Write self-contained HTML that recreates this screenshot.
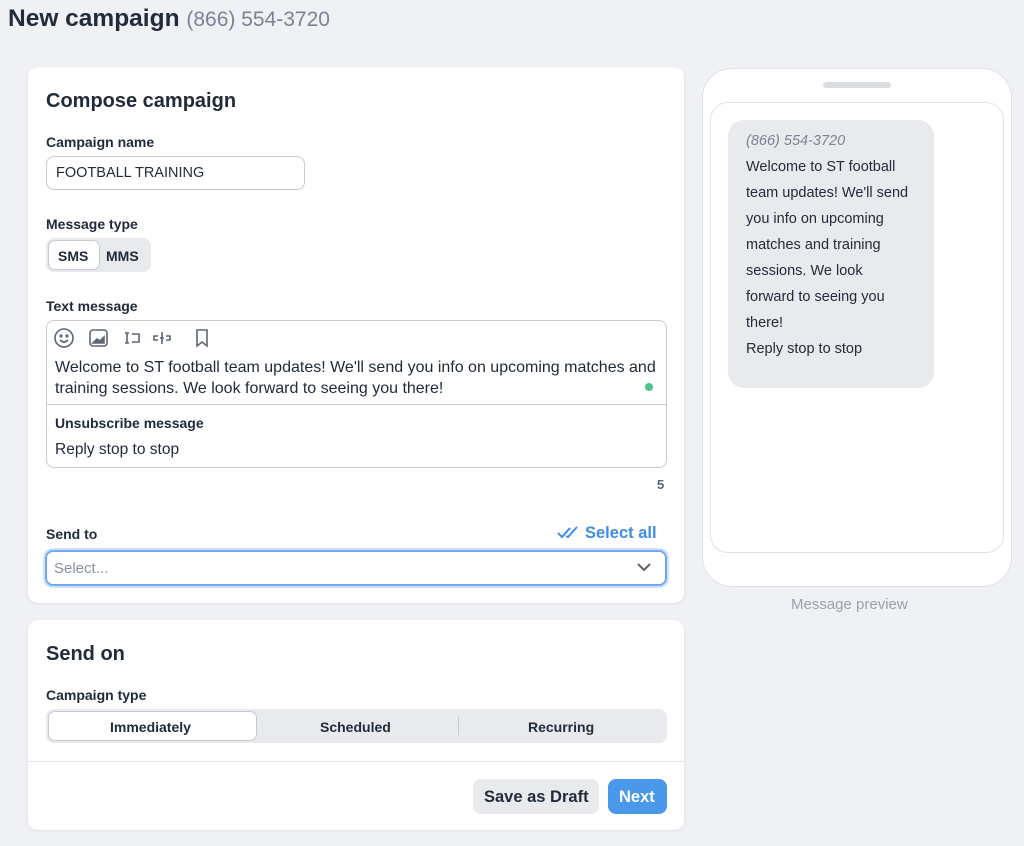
<!DOCTYPE html>
<html><head><meta charset="utf-8"><style>
*{box-sizing:border-box;margin:0;padding:0}
body{width:1024px;height:846px;background:#eff1f5;font-family:"Liberation Sans",sans-serif;color:#222b3a;position:relative;overflow:hidden}
.abs{position:absolute}
h1{position:absolute;left:8px;top:5px;font-size:24.5px;font-weight:bold;color:#222b3a;white-space:nowrap}
h1 span{font-weight:normal;color:#7a8395;font-size:21px}
.card{position:absolute;background:#fff;border-radius:10px;box-shadow:0 1px 3px rgba(0,0,0,.08)}
.lbl{position:absolute;font-size:14px;font-weight:bold;color:#222b3a}
.t{position:absolute;font-size:15px;color:#222b3a;white-space:nowrap}
</style></head><body>
<h1>New campaign <span>(866) 554-3720</span></h1>

<div class="card" style="left:28px;top:67px;width:656px;height:536px"></div>
<div class="t" style="left:46px;top:90px;font-size:20px;font-weight:bold">Compose campaign</div>
<div class="lbl" style="left:46px;top:134px">Campaign name</div>
<div class="abs" style="left:46px;top:156px;width:259px;height:34px;border:1px solid #c5cad3;border-radius:8px"></div>
<div class="t" style="left:56px;top:165px;font-size:14.5px">FOOTBALL TRAINING</div>
<div class="lbl" style="left:46px;top:216px">Message type</div>
<div class="abs" style="left:46px;top:238px;width:105px;height:34px;background:#e8eaee;border-radius:8px"></div>
<div class="abs" style="left:48px;top:240px;width:52px;height:30px;background:#fff;border:1px solid #c5cad3;border-radius:7px"></div>
<div class="lbl" style="left:58px;top:248px">SMS</div>
<div class="lbl" style="left:106px;top:248px">MMS</div>
<div class="lbl" style="left:46px;top:298px">Text message</div>
<div class="abs" style="left:46px;top:320px;width:621px;height:148px;border:1px solid #c5cad3;border-radius:8px"></div>
<div class="abs" style="left:47px;top:404px;width:619px;height:1px;background:#c5cad3"></div>
<svg class="abs" style="left:53px;top:327px" width="165" height="22" fill="none" stroke="#5d6675" stroke-width="1.6">
<circle cx="11" cy="11" r="9"/><circle cx="8" cy="9" r=".8" fill="#5d6675"/><circle cx="14" cy="9" r=".8" fill="#5d6675"/><path d="M7 13q4 4 8 0"/>
<rect x="37" y="3" width="17" height="16" rx="3"/><path d="M40 16l4-4 3 2 4-4v6z" fill="#5d6675"/>
<path d="M72 6h4M74 6v10M72 16h4M79 7h7v8h-7"/>
<path d="M105 9h-4v4h4M113 9h4v4h-4M109 5v12M107 11h4"/>
<path d="M144 3h10v16l-5-4-5 4z"/></svg>
<div class="t" style="left:55px;top:357px;line-height:21px;font-size:16px">Welcome to ST football team updates! We'll send you info on upcoming matches and<br>training sessions. We look forward to seeing you there!</div>
<div class="abs" style="left:645px;top:383px;width:8px;height:8px;border-radius:50%;background:#4cc38a"></div>
<div class="lbl" style="left:55px;top:415px">Unsubscribe message</div>
<div class="t" style="left:55px;top:441px;font-size:15.5px">Reply stop to stop</div>
<div class="t" style="left:657px;top:477px;font-size:13px;color:#5d6675;font-weight:bold">5</div>
<div class="lbl" style="left:46px;top:526px">Send to</div>
<svg class="abs" style="left:557px;top:526px" width="24" height="14" fill="none" stroke="#3e8ee6" stroke-width="2"><path d="M1 7l4 4 8-9M9 10l2 1 9-10"/></svg>
<div class="t" style="left:585px;top:524px;font-size:16.5px;font-weight:bold;color:#3e8ee6">Select all</div>
<div class="abs" style="left:45px;top:550px;width:622px;height:36px;border:2px solid #6ea8ef;border-radius:8px;box-shadow:0 0 0 2px #cfe2fa"></div>
<div class="t" style="left:54px;top:560px;color:#8a92a0">Select...</div>
<svg class="abs" style="left:636px;top:561px" width="16" height="12" fill="none" stroke="#5d6675" stroke-width="2"><path d="M2 3l6 6 6-6"/></svg>

<div class="card" style="left:28px;top:620px;width:656px;height:210px"></div>
<div class="t" style="left:46px;top:643px;font-size:20px;font-weight:bold">Send on</div>
<div class="lbl" style="left:46px;top:687px">Campaign type</div>
<div class="abs" style="left:46px;top:709px;width:621px;height:34px;background:#e8eaee;border-radius:8px"></div>
<div class="abs" style="left:48px;top:711px;width:209px;height:30px;background:#fff;border:1px solid #c5cad3;border-radius:7px"></div>
<div class="abs" style="left:458px;top:717px;width:1px;height:18px;background:#c5cad3"></div>
<div class="lbl" style="left:110px;top:719px">Immediately</div>
<div class="lbl" style="left:320px;top:719px">Scheduled</div>
<div class="lbl" style="left:528px;top:719px">Recurring</div>
<div class="abs" style="left:28px;top:761px;width:656px;height:1px;background:#e3e6eb"></div>
<div class="abs" style="left:473px;top:779px;width:126px;height:35px;background:#e8eaee;border-radius:8px"></div>
<div class="t" style="left:484px;top:788px;font-size:16.5px;font-weight:bold">Save as Draft</div>
<div class="abs" style="left:608px;top:779px;width:59px;height:35px;background:#4a98ea;border-radius:8px"></div>
<div class="t" style="left:619px;top:788px;font-size:16.5px;font-weight:bold;color:#fff">Next</div>

<div class="abs" style="left:702px;top:68px;width:310px;height:519px;background:#fff;border:1px solid #dfe2e7;border-radius:30px"></div>
<div class="abs" style="left:823px;top:82px;width:68px;height:6px;background:#d9dce1;border-radius:3px"></div>
<div class="abs" style="left:710px;top:102px;width:294px;height:451px;border:1px solid #dfe2e7;border-radius:18px"></div>
<div class="abs" style="left:728px;top:120px;width:206px;height:268px;background:#e8eaee;border-radius:16px"></div>
<div class="t" style="left:746px;top:133px;font-size:14.5px;color:#7a8395;font-style:italic">(866) 554-3720</div>
<div class="t" style="left:746px;top:154px;font-size:14.5px;line-height:26px">Welcome to ST football<br>team updates! We'll send<br>you info on upcoming<br>matches and training<br>sessions. We look<br>forward to seeing you<br>there!<br>Reply stop to stop</div>
<div class="t" style="left:791px;top:596px;color:#9aa1ad">Message preview</div>
</body></html>
